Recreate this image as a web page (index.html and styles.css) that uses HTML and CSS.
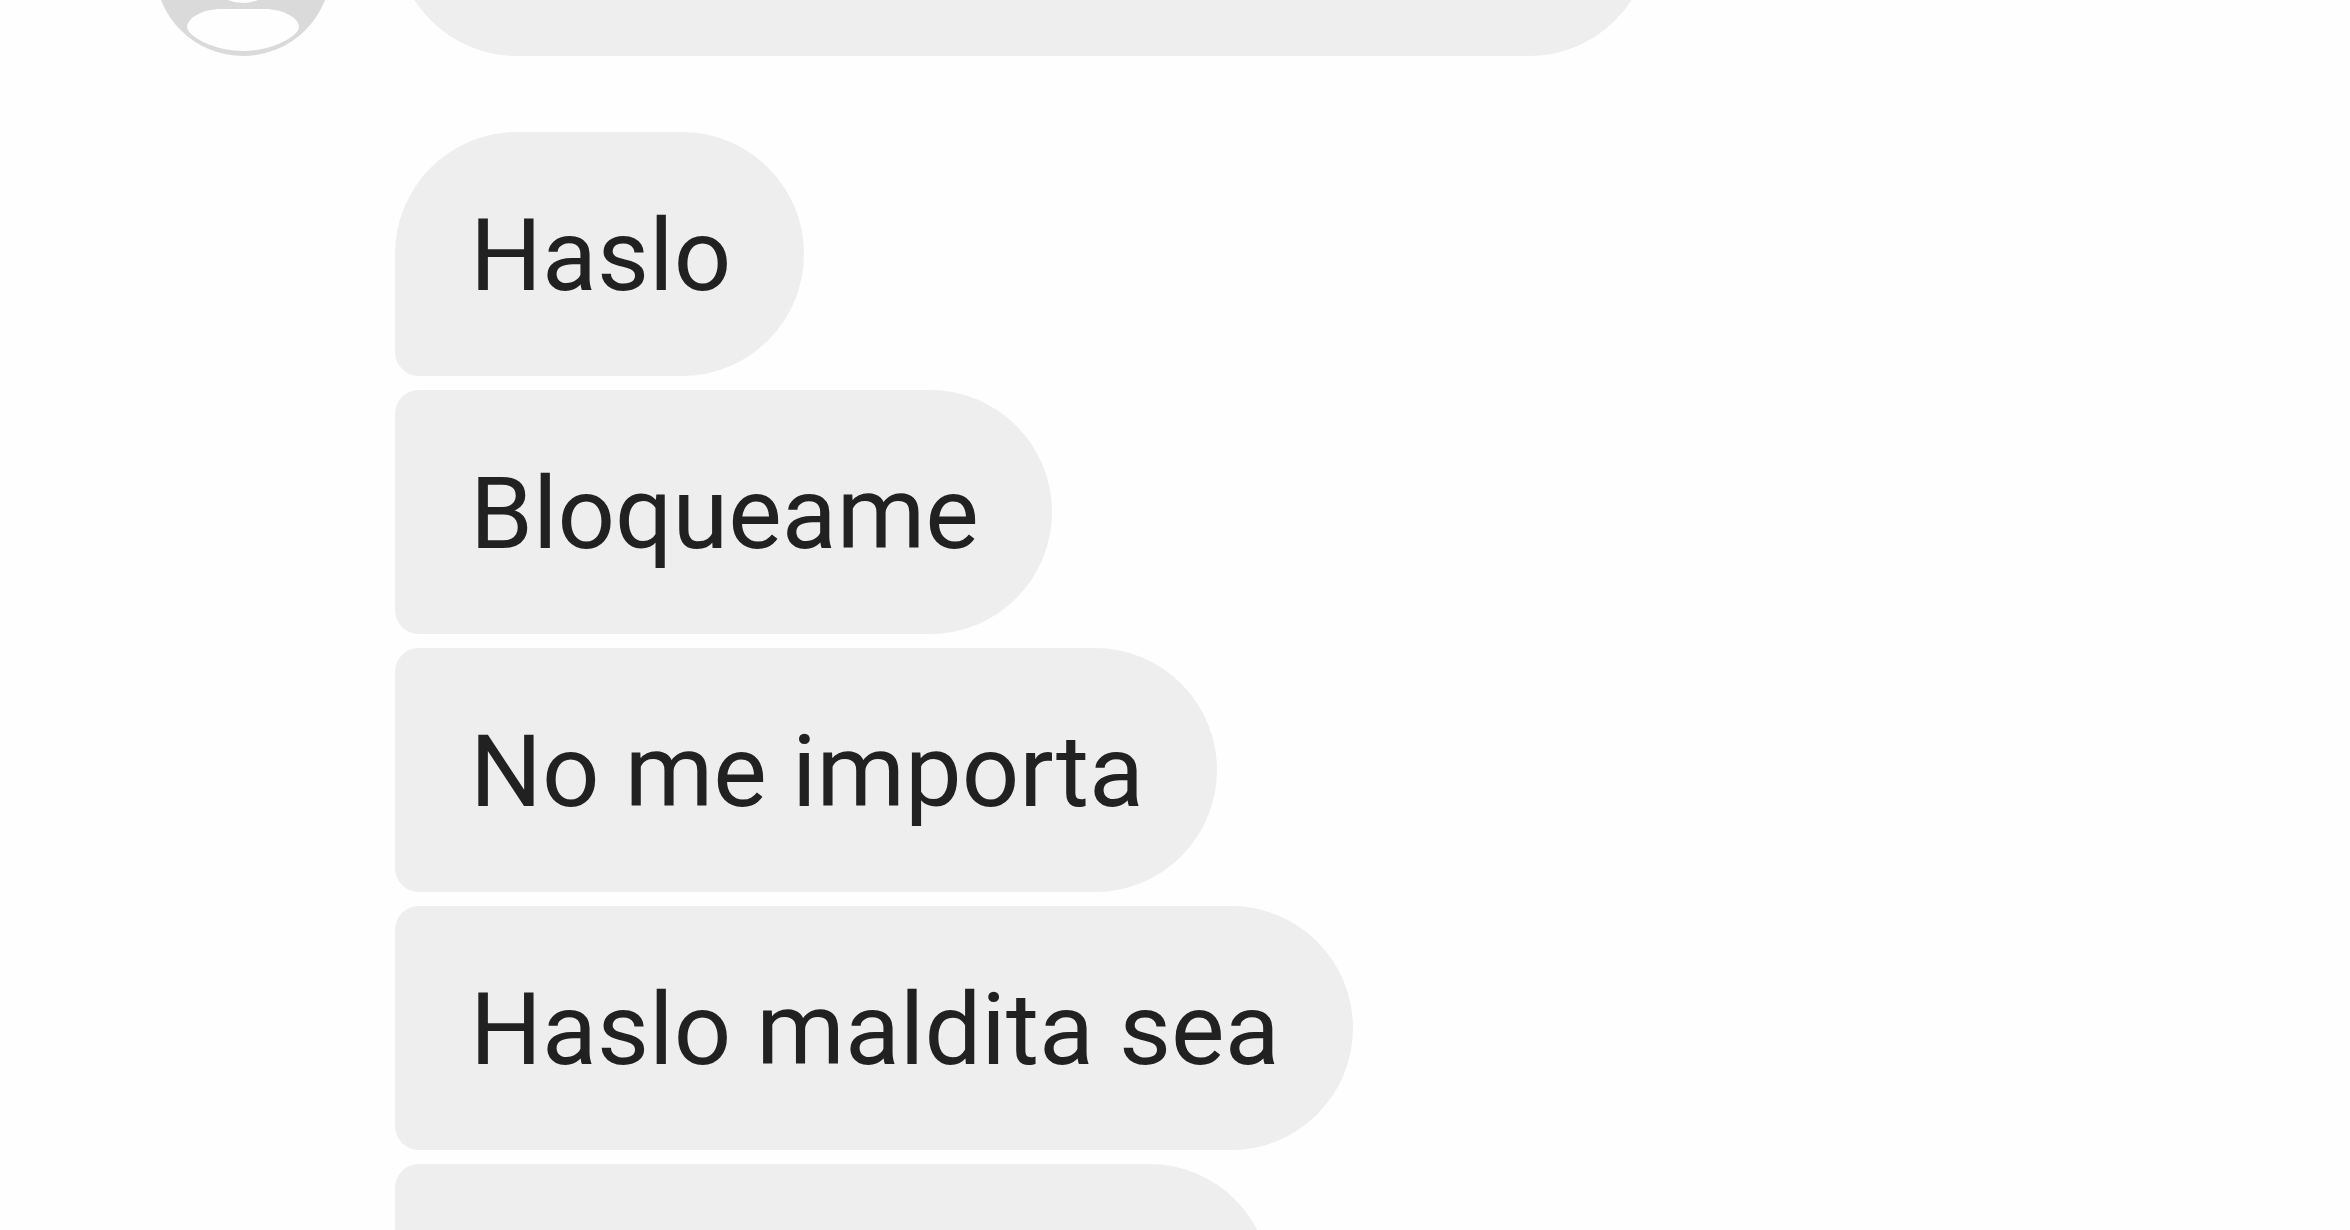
FILE: index.html
```html
<!DOCTYPE html>
<html lang="es">
<head>
<meta charset="utf-8">
<meta name="viewport" content="width=device-width, initial-scale=1">
<title>Chat</title>
<link rel="stylesheet" href="styles.css">
</head>
<body>
<main class="chat">
  <div class="row">
    <svg class="avatar" viewBox="0 0 176 176" aria-hidden="true">
      <circle cx="88" cy="88" r="88" fill="#dadada"/>
      <circle cx="88" cy="83" r="40" fill="#fefefe"/>
      <path d="M66 129H110C128 129 144 138 144 147C144 156 117 171 88 171C59 171 32 156 32 147C32 138 48 129 66 129Z" fill="#fefefe"/>
    </svg>
    <div class="bubble bubble-end bubble-long"></div>
  </div>
  <div class="group">
    <p class="bubble bubble-start">Haslo</p>
    <p class="bubble">Bloqueame</p>
    <p class="bubble">No me importa</p>
    <p class="bubble">Haslo maldita sea</p>
    <div class="bubble bubble-short"></div>
  </div>
</main>
</body>
</html>
```
FILE: styles.css
```css
* {
  box-sizing: border-box;
}

body {
  margin: 0;
  background: #fefefe;
  color: #212121;
  font-family: Roboto, "Liberation Sans", sans-serif;
}

.chat {
  display: flex;
  flex-direction: column;
  gap: 76px;
  height: 100vh;
  padding-left: 155px;
  overflow: hidden;
}

/* The thread is scrolled, so the first row starts above the window. */
.row {
  display: flex;
  flex-shrink: 0;
  align-items: flex-end;
  gap: 64px;
  margin-top: -188px;
}

.avatar {
  width: 176px;
  height: 176px;
  flex-shrink: 0;
}

.group {
  display: flex;
  flex-direction: column;
  align-items: flex-start;
  gap: 14px;
  margin-left: 240px;
}

.bubble {
  min-height: 244px;
  margin: 0;
  padding: 64px 73px 60px 75px;
  border-radius: 24px 122px 122px 24px;
  background: #eee;
  font-size: 101px;
  line-height: 120px;
}

.bubble-start {
  border-top-left-radius: 122px;
}

.bubble-end {
  border-bottom-left-radius: 122px;
}

.bubble-long {
  width: 1256px;
}

.bubble-short {
  width: 876px;
}
```
